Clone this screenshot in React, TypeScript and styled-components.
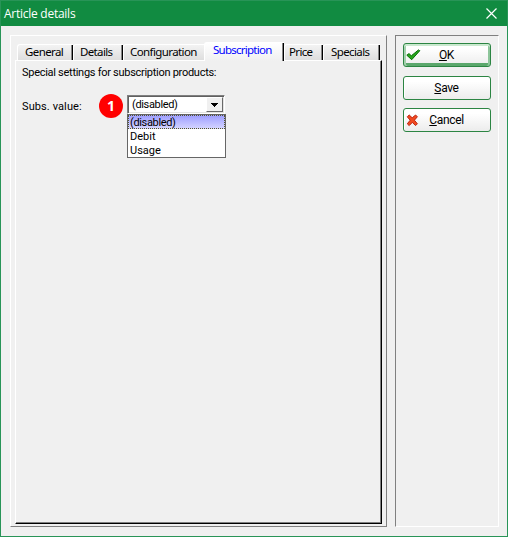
import React from "react";
import styled, { createGlobalStyle } from "styled-components";

const Global = createGlobalStyle`
  *, *::after { box-sizing: border-box; }
  body { margin: 0; background: #f0f0f0; }
`;

const Window = styled.div`
  width: 508px;
  height: 537px;
  background: #f0f0f0;
  border: 1px solid #289457;
  display: flex;
  flex-direction: column;
  color: #000;
  font: 11px/13px Roboto, "Liberation Sans", sans-serif;
  overflow: hidden;
`;

const TitleBar = styled.header`
  height: 25px;
  flex: none;
  background: #118b41;
  color: #fff;
  display: flex;
  align-items: center;
  justify-content: space-between;
  padding: 0 10px 0 3px;
  font: 12px/16px "Open Sans", "Noto Sans", sans-serif;
`;

const TitleText = styled.span`
  letter-spacing: -0.26px;
`;

const Body = styled.div`
  display: flex;
  gap: 8px;
  padding: 9px 8px 9px 9px;
  flex: 1;
`;

const TabPanel = styled.main`
  width: 377px;
  border: 1px solid;
  border-color: #fff #808080 #808080 #fff;
  padding: 6px 4px 3px;
  display: flex;
  flex-direction: column;
`;

const TabStrip = styled.div`
  display: flex;
  height: 18px;
  flex: none;
  align-items: flex-end;
  padding-left: 2px;
`;

const Tab = styled.button<{ $w: number; $active?: boolean; $plain?: boolean; $track: number; $inset: number }>`
  width: ${(p) => p.$w}px;
  height: ${(p) => (p.$active ? 19 : 16)}px;
  margin: 0 0 ${(p) => (p.$active ? -1 : 0)}px;
  padding: 0 0 ${(p) => (p.$active ? 4 : 1)}px ${(p) => p.$inset}px;
  flex: none;
  position: relative;
  border: 0 solid #fff;
  border-width: 1px 0 0 1px;
  border-radius: 3px 0 0 0;
  background: ${(p) => (p.$active ? "linear-gradient(#fff, #f0f0f0)" : "linear-gradient(#f3f3f3, #dedede)")};
  color: ${(p) => (p.$active ? "#0000ff" : "#000")};
  font: 11.5px/14px "Noto Sans", sans-serif;
  letter-spacing: ${(p) => p.$track}px;
  text-align: left;
  white-space: nowrap;
  &::after {
    content: "";
    display: ${(p) => (p.$plain ? "none" : "block")};
    position: absolute;
    right: 0;
    top: 0;
    bottom: 0;
    width: 2px;
    border-left: 1px solid #858585;
    background: #000;
  }
`;

const Page = styled.section`
  flex: 1;
  border: 1px solid;
  border-color: #fff #000 #000 #fff;
  box-shadow: inset -1px -1px #808080;
  margin-bottom: -1px;
  padding: 5px 6px;
`;

const Copy = styled.span<{ $track?: number }>`
  letter-spacing: ${(p) => p.$track ?? 0}px;
  white-space: nowrap;
`;

const Field = styled.div`
  display: flex;
  align-items: center;
  margin-top: 15px;
  height: 24px;
`;

const FieldLabel = styled.div`
  width: 77px;
  display: flex;
`;

const Marker = styled.span`
  width: 24px;
  height: 24px;
  flex: none;
  border-radius: 50%;
  background: #f00;
  color: #fff;
  display: flex;
  align-items: center;
  justify-content: center;
  font: bold 14px/24px "Open Sans", "Noto Sans", sans-serif;
`;

const Combo = styled.div`
  position: relative;
  width: 98px;
  height: 19px;
  margin: -3px 0 0 4px;
  background: #fff;
  border: 1px solid;
  border-color: #808080 #fff #fff #808080;
  box-shadow: inset 1px 1px #606060, inset -1px -1px #e3e3e3;
  display: flex;
  align-items: center;
  justify-content: space-between;
  padding: 1px 1px 1px 4px;
`;

const DropButton = styled.button`
  width: 17px;
  height: 15px;
  padding: 0;
  border: 1px solid;
  border-color: #fff #696969 #696969 #fff;
  background: #f0f0f0;
  display: flex;
  align-items: center;
  justify-content: center;
`;

const Menu = styled.ul`
  position: absolute;
  top: 18px;
  left: -1px;
  width: 99px;
  height: 44px;
  margin: 0;
  padding: 0;
  border: 1px solid #666;
  background: #fff;
  list-style: none;
`;

const Option = styled.li<{ $selected?: boolean }>`
  height: 14px;
  padding-left: 2px;
  line-height: 16px;
  background: ${(p) => (p.$selected ? "linear-gradient(#9c9cff, #d6d6ff)" : "#fff")};
  outline: ${(p) => (p.$selected ? "1px dotted #55552a" : "0")};
  outline-offset: -1px;
`;

const Actions = styled.aside`
  width: 104px;
  border: 1px solid;
  border-color: #808080 #fff #fff #808080;
  padding: 7px;
  display: flex;
  flex-direction: column;
  gap: 8px;
`;

const ActionButton = styled.button<{ $primary?: boolean }>`
  width: 88px;
  height: 24px;
  flex: none;
  padding: 0 1px 0 0;
  position: relative;
  border: 1px solid #2c8543;
  border-radius: 3px;
  background: linear-gradient(#fff 20%, #ececec);
  box-shadow: ${(p) =>
    p.$primary
      ? "inset 0 2px #cae9cf, inset 2px 0 #a4d0ad, inset -2px 0 #8dc59a, inset 0 -3px #5ba76c"
      : "inset 1px 1px #fff"};
  color: #000;
  font: 12px/14px Roboto, "Liberation Sans", sans-serif;
  letter-spacing: -0.35px;
  text-align: center;
  &:first-child { margin-bottom: 1px; }
`;

const Mnemonic = styled.span`
  text-decoration: underline;
  text-underline-offset: 1px;
  text-decoration-thickness: 1px;
`;

const ButtonIcon = styled.svg`
  position: absolute;
  left: 2px;
  top: 5px;
`;

const tabs = [
  { name: "General", w: 56, track: -0.6, inset: 7 },
  { name: "Details", w: 50, track: -0.65, inset: 6 },
  { name: "Configuration", w: 81, track: -0.6, inset: 6, plain: true },
  { name: "Subscription", w: 80, track: -0.75, inset: 8, active: true },
  { name: "Price", w: 39, track: -0.65, inset: 4 },
  { name: "Specials", w: 57, track: -0.6, inset: 7 },
];

export default function App() {
  return (
    <>
      <Global />
      <Window>
        <TitleBar>
          <TitleText>Article details</TitleText>
          <svg width="11" height="11" viewBox="0 0 11 11" fill="none" stroke="#fff" strokeWidth="1.2">
            <path d="M.5.5l10 10M10.5.5l-10 10" />
          </svg>
        </TitleBar>
        <Body>
          <TabPanel>
            <TabStrip>
              {tabs.map((t) => (
                <Tab key={t.name} $w={t.w} $track={t.track} $inset={t.inset} $active={t.active} $plain={t.plain}>
                  {t.name}
                </Tab>
              ))}
            </TabStrip>
            <Page>
              <Copy $track={-0.28}>Special settings for subscription products:</Copy>
              <Field>
                <FieldLabel>
                  <Copy $track={0.1}>Subs. value:</Copy>
                </FieldLabel>
                <Marker>1</Marker>
                <Combo>
                  <Copy $track={-0.35}>(disabled)</Copy>
                  <DropButton aria-label="Open list">
                    <svg width="7" height="4" viewBox="0 0 7 4" shapeRendering="crispEdges">
                      <path d="M0 0h7v1H6v1H5v1H4v1H3V3H2V2H1V1H0z" />
                    </svg>
                  </DropButton>
                  <Menu>
                    <Option $selected><Copy $track={-0.35}>(disabled)</Copy></Option>
                    <Option>Debit</Option>
                    <Option>Usage</Option>
                  </Menu>
                </Combo>
              </Field>
            </Page>
          </TabPanel>
          <Actions>
            <ActionButton $primary>
              <ButtonIcon width="15" height="12" viewBox="0 0 15 12">
                <path d="M.8 6.2L3 4.6l2.3 2.2L12.5.9l1.3.8L5.7 10.7z" fill="#28a51c" stroke="#087008" />
              </ButtonIcon>
              <Mnemonic>O</Mnemonic>K
            </ActionButton>
            <ActionButton><Mnemonic>S</Mnemonic>ave</ActionButton>
            <ActionButton>
              <ButtonIcon width="13" height="13" viewBox="0 0 13 13">
                <path d="M1.3 2.8L3.2 1l3 2.8L9.6 1l1.8 1.8-3 3.4 3 3.6-1.8 1.8-3.3-3.2-3.1 3.2-1.9-1.8 2.9-3.6z" fill="#f14a20" stroke="#bd2410" />
              </ButtonIcon>
              <Mnemonic>C</Mnemonic>ancel
            </ActionButton>
          </Actions>
        </Body>
      </Window>
    </>
  );
}
